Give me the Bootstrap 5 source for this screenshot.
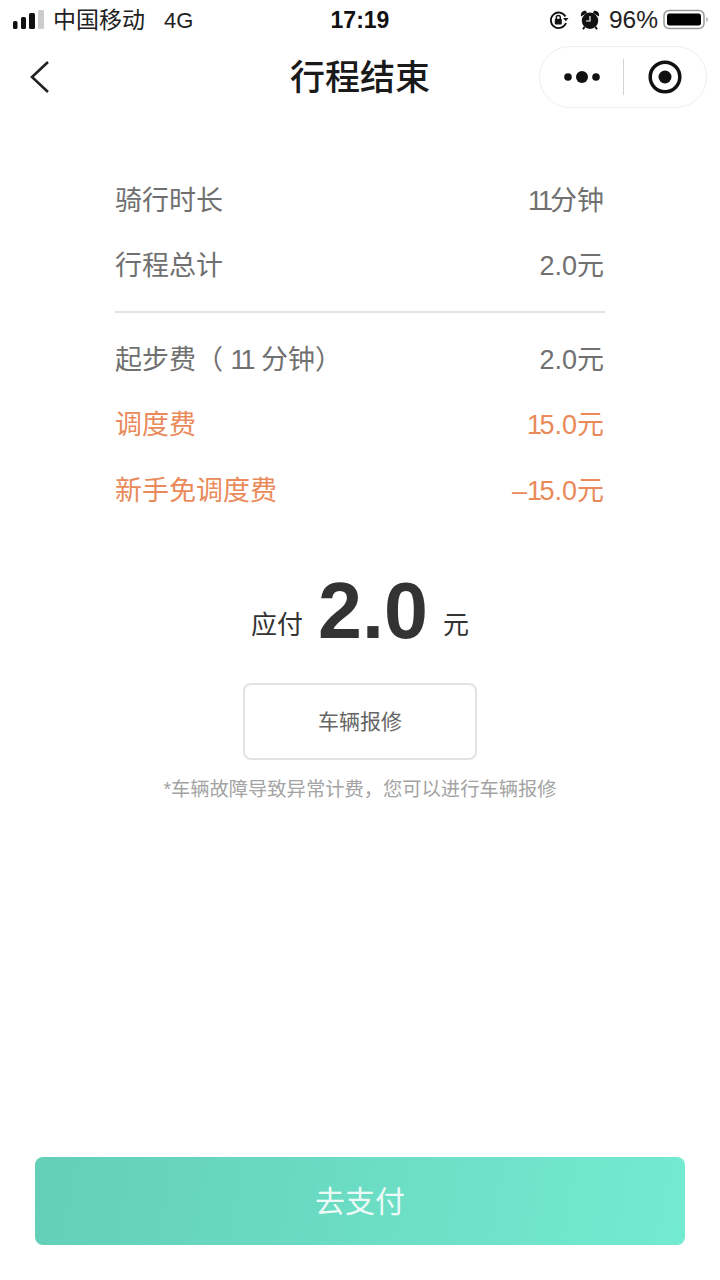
<!DOCTYPE html>
<html lang="zh-CN">
<head>
    <meta charset="UTF-8">
    <meta name="viewport" content="width=device-width, initial-scale=1.0">
    <title>行程结束</title>
    <link href="https://cdn.jsdelivr.net/npm/bootstrap@5.3.0/dist/css/bootstrap.min.css" rel="stylesheet">
    <style>
        html, body { height: 1280px; overflow: hidden; }
        body { font-family: "Liberation Sans", "Noto Sans CJK SC", sans-serif; background: #fff; color: #333; }
        .page-wrap { height: 1280px; }
        .status-bar { height: 40px; padding: 0 11px 0 12px; font-size: 23px; color: #222; position: relative; }
        .status-time { position: absolute; left: 0; right: 0; top: 0; line-height: 40px; text-align: center; font-weight: 700; font-size: 23px; color: #111; }
        .carrier { margin-left: 9px; }
        .net { margin-left: 19px; font-size: 22px; }
        .rotate-icon { margin-right: 11px; }
        .battery-pct { font-size: 24.5px; margin: 0 5px 0 9px; }
        .title-bar { height: 74px; position: relative; }
        .title-text { font-size: 35px; font-weight: 500; color: #1a1a1a; line-height: 76px; text-align: center; }
        .back-icon { position: absolute; left: 29px; top: 19px; }
        .capsule { position: absolute; left: 539px; top: 6px; width: 168px; height: 62px; border: 1px solid #eee; border-radius: 31px; }
        .capsule-dots { width: 83px; }
        .capsule-line { width: 1px; height: 36px; background: #d4d4d4; }
        .capsule-dot { padding-right: 1px; }
        .fee-list { padding: 54px 115px 0 115px; }
        .fee-row { height: 65.500px; font-size: 27px; color: #707070; padding-right: 1px; }
        .fee-row.accent { color: #ea8a5a; }
        .fee-divider { border-top: 2px solid #e3e3e3; margin: 12px 0 14px; }
        .kern-one { letter-spacing: -3px; }
        .kern-gap { margin-right: 1px; }
        .kern-lead { letter-spacing: -2.500px; }
        .pay-line { margin-top: 44px; height: 84px; color: #333; font-size: 26px; }
        .pay-amount { font-size: 79px; font-weight: 700; line-height: 84px; margin: 0 15px -1px 15px; color: #333; }
        .pay-unit { padding-bottom: 7px; }
        .repair-btn { width: 234px; height: 77px; border: 2px solid #e2e2e2; border-radius: 8px; background: #fff; color: #666; font-size: 21px; margin-top: 31px; padding-top: 3px; }
        .repair-note { font-size: 19.300px; color: #a3a3a3; margin-top: 16px; line-height: 28px; }
        .pay-btn { position: absolute; left: 35px; top: 1157px; width: 650px; height: 88px; border: 0; border-radius: 8px; font-size: 30px; color: rgba(255,255,255,.9); background: linear-gradient(100deg, #63cfb7, #73ebd0); }
    </style>
</head>
<body>
    <div class="page-wrap position-relative">
        <div class="status-bar d-flex align-items-center">
            <svg width="32" height="22" viewBox="0 0 32 22">
                <rect x="1" y="12" width="4.500" height="8" rx="1.500" fill="#111"/>
                <rect x="9" y="8" width="5" height="12" rx="1.500" fill="#111"/>
                <rect x="17" y="4" width="6" height="16" rx="1.500" fill="#111"/>
                <rect x="26" y="1" width="6" height="19" rx="1.500" fill="#ccc"/>
            </svg>
            <span class="carrier">中国移动</span>
            <span class="net">4G</span>
            <div class="status-time">17:19</div>
            <div class="ms-auto d-flex align-items-center">
                <svg width="20" height="20" viewBox="0 0 20 20" class="rotate-icon">
                    <path d="M16.500 6.500A7.800 7.800 0 1 0 17 13" fill="none" stroke="#111" stroke-width="1.800"/>
                    <path d="M14 8h5.500l-2.700 3.200z" fill="#111"/>
                    <rect x="5.800" y="8.800" width="7" height="5.700" rx="1" fill="#111"/>
                    <path d="M7.300 9V7.500a2 2 0 0 1 4 0V9" fill="none" stroke="#111" stroke-width="1.400"/>
                </svg>
                <svg width="20" height="20" viewBox="0 0 20 20">
                    <circle cx="10" cy="10.800" r="8.200" fill="#111"/>
                    <path d="M10 6v5H6" fill="none" stroke="#fff" stroke-width="1.200"/>
                    <path d="M1 6.500C.3 2.800 2.500.4 6 .8L7 3zM19 6.500C19.700 2.800 17.500.4 14 .8L13 3z" fill="#111"/>
                    <path d="M4.500 17l-1.500 2.300M15.500 17l1.500 2.300" stroke="#111" stroke-width="2"/>
                </svg>
                <span class="battery-pct">96%</span>
                <svg width="46" height="22" viewBox="0 0 46 22">
                    <rect x="1" y="1.500" width="40" height="18" rx="5" fill="none" stroke="#999" stroke-width="1.500"/>
                    <rect x="4" y="4.500" width="34" height="12" rx="2.500" fill="#000"/>
                    <path d="M43 8v5c1.200-.4 2-1.300 2-2.500s-.8-2.100-2-2.500z" fill="#bbb"/>
                </svg>
            </div>
        </div>

        <div class="title-bar">
            <svg class="back-icon" width="24" height="36" viewBox="0 0 24 36">
                <path d="M19 3 3 18l16 15" fill="none" stroke="#222" stroke-width="2.600"/>
            </svg>
            <div class="title-text">行程结束</div>
            <div class="capsule d-flex align-items-center">
                <div class="capsule-dots d-flex justify-content-center">
                    <svg width="38" height="14" viewBox="0 0 38 14">
                        <circle cx="5" cy="7" r="3.800" fill="#111"/>
                        <circle cx="19" cy="7" r="6" fill="#111"/>
                        <circle cx="33" cy="7" r="3.800" fill="#111"/>
                    </svg>
                </div>
                <div class="capsule-line"></div>
                <div class="capsule-dot flex-fill d-flex justify-content-center">
                    <svg width="34" height="34" viewBox="0 0 34 34">
                        <circle cx="17" cy="17" r="14.800" fill="none" stroke="#111" stroke-width="3.500"/>
                        <circle cx="17" cy="17" r="6.500" fill="#111"/>
                    </svg>
                </div>
            </div>
        </div>

        <div class="fee-list">
            <div class="fee-row d-flex justify-content-between align-items-center"><span>骑行时长</span><span><span class="kern-one">11</span>分钟</span></div>
            <div class="fee-row d-flex justify-content-between align-items-center"><span>行程总计</span><span>2.0元</span></div>
            <div class="fee-divider"></div>
            <div class="fee-row d-flex justify-content-between align-items-center"><span>起步费（ <span class="kern-one kern-gap">11</span> 分钟）</span><span>2.0元</span></div>
            <div class="fee-row accent d-flex justify-content-between align-items-center"><span>调度费</span><span><span class="kern-lead">1</span>5.0元</span></div>
            <div class="fee-row accent d-flex justify-content-between align-items-center"><span>新手免调度费</span><span>–<span class="kern-lead">1</span>5.0元</span></div>
        </div>

        <div class="pay-line d-flex justify-content-center align-items-end">
            <span class="pay-unit">应付</span>
            <span class="pay-amount">2.0</span>
            <span class="pay-unit">元</span>
        </div>

        <div class="d-flex flex-column align-items-center">
            <button type="button" class="repair-btn">车辆报修</button>
            <div class="repair-note">*车辆故障导致异常计费，您可以进行车辆报修</div>
        </div>

        <button type="button" class="pay-btn">去支付</button>
    </div>

    <script src="https://cdn.jsdelivr.net/npm/bootstrap@5.3.0/dist/js/bootstrap.bundle.min.js"></script>
</body>
</html>
